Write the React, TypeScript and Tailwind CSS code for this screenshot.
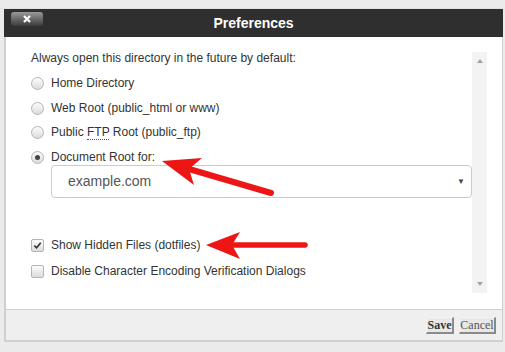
import React from 'react';

function Radio({ checked }: { checked?: boolean }) {
  return (
    <span className="w-[13px] h-[13px] rounded-full border border-[#b5b5b5] bg-gradient-to-b from-[#fdfdfd] to-[#dcdcdc] flex items-center justify-center shrink-0">
      {checked && <span className="w-[5px] h-[5px] rounded-full bg-[#444]" />}
    </span>
  );
}

function Checkbox({ checked }: { checked?: boolean }) {
  return (
    <span className="w-[13px] h-[13px] rounded-[2px] border border-[#b5b5b5] bg-gradient-to-b from-[#fdfdfd] to-[#dcdcdc] flex items-center justify-center shrink-0">
      {checked && (
        <svg width="9" height="9" viewBox="0 0 10 10">
          <path d="M1.5 5.2 L4 7.6 L8.6 2" fill="none" stroke="#333" strokeWidth="1.8" />
        </svg>
      )}
    </span>
  );
}

export default function App() {
  const options = [
    { label: 'Home Directory', mt: 'mt-[9px]' },
    { label: 'Web Root (public_html or www)', mt: 'mt-[9px]' },
    { label: 'ftp', mt: 'mt-[8px]' },
  ];

  return (
    <div className="w-[505px] h-[352px] bg-[#ebebeb] relative overflow-hidden font-['Liberation_Sans',Arial,sans-serif] text-[#333]">
      <div className="h-[9px] border-b border-[#e2e2e2]" />
      <div className="ml-[4px] w-[499px] flex flex-col">
        {/* Title bar */}
        <div className="h-[28px] bg-[#2f2f2f] relative flex items-center justify-center">
          <button className="absolute left-[7px] top-[3px] w-[32px] h-[14px] rounded-[3px] bg-gradient-to-b from-[#9a9a9a] to-[#3c3c3c] flex items-center justify-center">
            <svg width="8" height="8" viewBox="0 0 8 8">
              <path d="M1 1 L7 7 M7 1 L1 7" stroke="#fff" strokeWidth="2.2" />
            </svg>
          </button>
          <h1 className="text-white text-[14px] font-bold">Preferences</h1>
        </div>

        {/* Body */}
        <div className="h-[272px] bg-white border-l-2 border-r border-[#cfcfcf] flex">
          <div className="flex-1 pl-[25px] pt-[13px] flex flex-col text-[12px]">
            <p className="h-[16px] leading-[16px]">Always open this directory in the future by default:</p>
            {options.map((o) => (
              <label key={o.label} className={`${o.mt} h-[16px] flex items-center gap-[7px]`}>
                <Radio />
                {o.label === 'ftp' ? (
                  <span>
                    Public <abbr className="no-underline border-b border-dotted border-[#555]">FTP</abbr> Root (public_ftp)
                  </span>
                ) : (
                  <span>{o.label}</span>
                )}
              </label>
            ))}
            <label className="mt-[9px] h-[16px] flex items-center gap-[7px]">
              <Radio checked />
              <span>Document Root for:</span>
            </label>
            <div className="ml-[20px] h-[33px] border border-[#cccccc] rounded-[4px] flex items-center justify-between pl-[16px] pr-[6px]">
              <span className="text-[14px] text-[#555]">example.com</span>
              <span className="text-[8px] text-[#444]">▼</span>
            </div>
            <label className="mt-[39px] h-[16px] flex items-center gap-[7px]">
              <Checkbox checked />
              <span>Show Hidden Files (dotfiles)</span>
            </label>
            <label className="mt-[10px] h-[16px] flex items-center gap-[7px]">
              <Checkbox />
              <span>Disable Character Encoding Verification Dialogs</span>
            </label>
          </div>
          {/* scrollbar */}
          <div className="w-[15px] mt-[15px] mb-[16px] bg-[#f3f3f3] flex flex-col justify-between items-center py-[7px]">
            <span className="w-0 h-0 border-l-[3.5px] border-r-[3.5px] border-b-[4px] border-l-transparent border-r-transparent border-b-[#a3a3a3]" />
            <span className="w-0 h-0 border-l-[3.5px] border-r-[3.5px] border-t-[4px] border-l-transparent border-r-transparent border-t-[#a3a3a3]" />
          </div>
          <div className="w-[15px]" />
        </div>

        {/* Footer */}
        <div className="h-[33px] bg-[#efefef] border-t border-b-2 border-l-2 border-r border-[#cfcfcf] flex items-center justify-end gap-[5px] pr-[6px] font-['Liberation_Serif','Times_New_Roman',serif] text-[12px]">
          <button className="w-[28px] h-[17px] bg-[#e8e8e8] border border-t-[#f4f4f4] border-l-[#f4f4f4] border-r-[#8a8a8a] border-b-[#8a8a8a] border-r-2 border-b-2 font-bold text-[#333] leading-none flex items-center justify-center">
            Save
          </button>
          <button className="w-[37px] h-[17px] bg-[#e8e8e8] border border-t-[#f4f4f4] border-l-[#f4f4f4] border-r-[#8a8a8a] border-b-[#8a8a8a] border-r-2 border-b-2 text-[#555] leading-none flex items-center justify-center">
            Cancel
          </button>
        </div>
      </div>

      {/* annotation arrows */}
      <svg className="absolute inset-0 pointer-events-none" width="505" height="352" viewBox="0 0 505 352">
        <line x1="189" y1="169" x2="271" y2="193" stroke="#ee1515" strokeWidth="6" strokeLinecap="round" />
        <polygon points="162,161 202,158 189,169 194,185" fill="#ee1515" />
        <line x1="230" y1="245" x2="305" y2="245" stroke="#ee1515" strokeWidth="5.5" strokeLinecap="round" />
        <polygon points="206,245 240,232 232,245 240,259" fill="#ee1515" />
      </svg>
    </div>
  );
}
